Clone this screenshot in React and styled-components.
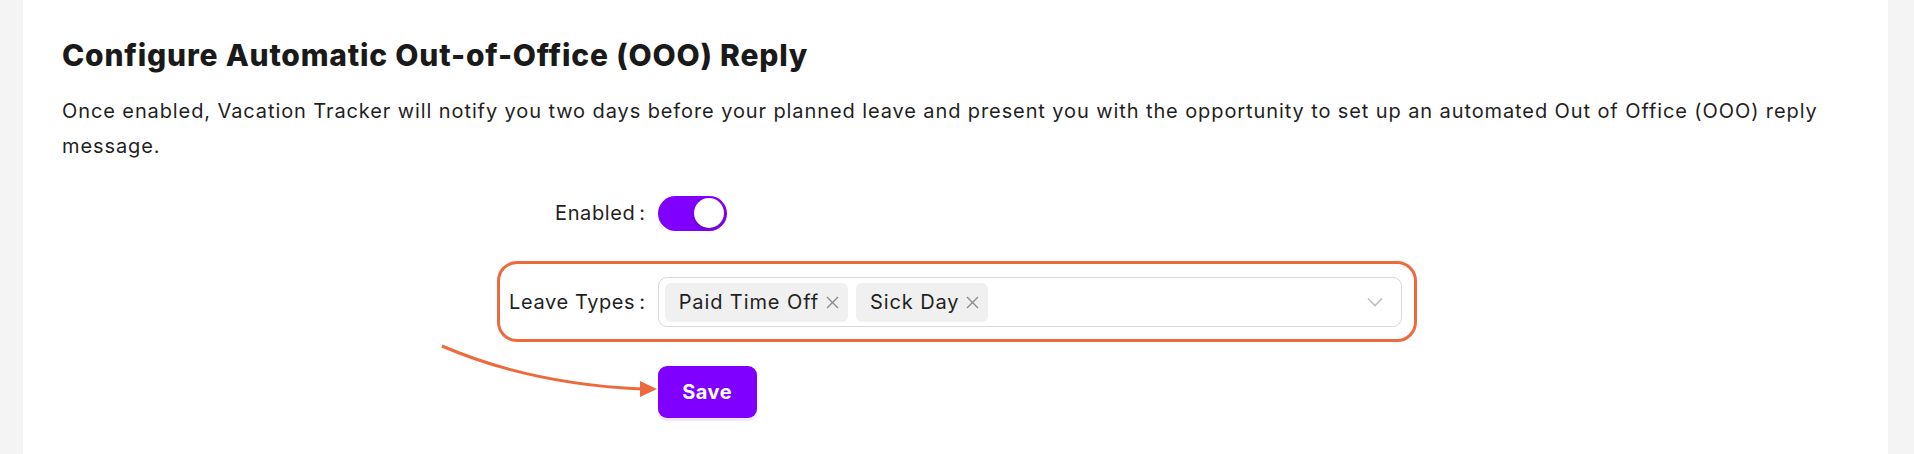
import React from 'react';
import styled, {createGlobalStyle} from 'styled-components';

const GlobalStyle = createGlobalStyle`
  body {
    margin: 0;
    background: #f4f4f4;
    font-family: Inter, Lato, sans-serif;
    color: #1f1f1f;
  }
`;

const Page = styled.div`
  display: flex;
  padding: 0 26px 0 23px;
  min-height: 454px;
`;

const Card = styled.section`
  flex: 1;
  background: #fff;
  padding: 35px 39px 0;
`;

const Title = styled.h2`
  margin: 0 0 19px;
  font-size: 30px;
  line-height: 40px;
  font-weight: 800;
  letter-spacing: 0.8px;
  color: #1a1a1a;
`;

const Intro = styled.p`
  margin: 0 0 24px;
  font-size: 20px;
  line-height: 35px;
  letter-spacing: 0.9px;
`;

const Form = styled.div`
  display: flex;
  flex-direction: column;
  gap: 39px;
`;

const Row = styled.div`
  position: relative;
  display: flex;
  align-items: center;
  min-height: ${p => p.height || 50}px;
`;

const Label = styled.label`
  width: 33.333%;
  flex: none;
  text-align: right;
  font-size: 20px;
  letter-spacing: 0.6px;

  &::after {
    content: ':';
    margin: 0 12px 0 4px;
  }
`;

const Spacer = styled.div`
  width: 33.333%;
  flex: none;
`;

const Control = styled.div`
  width: 41.667%;
  flex: none;
  display: flex;
  align-items: center;
`;

const Switch = styled.button`
  width: 69px;
  height: 35px;
  border: none;
  border-radius: 18px;
  background: #7f00ff;
  padding: 2.5px;
  display: flex;
  justify-content: flex-end;

  & span {
    width: 30px;
    height: 30px;
    border-radius: 50%;
    background: #fff;
    box-shadow: 0 2px 4px rgba(0, 35, 11, 0.2);
  }
`;

const Select = styled.div`
  flex: 1;
  height: 50px;
  box-sizing: border-box;
  border: 1px solid #d9d9d9;
  border-radius: 9px;
  padding: 0 18px 0 6px;
  display: flex;
  align-items: center;
  gap: 8px;
`;

const Tag = styled.span`
  height: 39px;
  display: inline-flex;
  align-items: center;
  gap: 7px;
  padding: 0 9px 0 14px;
  background: #f0f0f0;
  border-radius: 6px;
  font-size: 20px;
  letter-spacing: 0.9px;
  color: #1f1f1f;
`;

const Chevron = styled.svg`
  margin-left: auto;
`;

const Highlight = styled.div`
  position: absolute;
  left: 435px;
  top: -16px;
  width: 920px;
  height: 81px;
  box-sizing: border-box;
  border: 3px solid #ec6a3e;
  border-radius: 20px;
  pointer-events: none;
`;

const SaveButton = styled.button`
  height: 52px;
  width: 99px;
  border: none;
  border-radius: 9px;
  background: #7f00ff;
  color: #fff;
  font-family: inherit;
  font-size: 20px;
  font-weight: 700;
  letter-spacing: 0.5px;
  box-shadow: 0 3px 0 rgba(127, 0, 255, 0.1);
`;

const Pointer = styled.svg`
  position: absolute;
  left: 368px;
  top: -27px;
  overflow: visible;
`;

const Close = () => (
  <svg width="13" height="13" viewBox="0 0 13 13">
    <path d="M1 1L12 12M12 1L1 12" stroke="#8c8c8c" strokeWidth="1.4" />
  </svg>
);

export default function App() {
  return (
    <>
      <GlobalStyle />
      <Page>
        <Card>
          <Title>Configure Automatic Out-of-Office (OOO) Reply</Title>
          <Intro>
            Once enabled, Vacation Tracker will notify you two days before your planned leave and present you with the
            opportunity to set up an automated Out of Office (OOO) reply message.
          </Intro>
          <Form>
            <Row>
              <Label>Enabled</Label>
              <Control>
                <Switch><span /></Switch>
              </Control>
            </Row>
            <Row>
              <Highlight />
              <Label>Leave Types</Label>
              <Control>
                <Select>
                  <Tag>Paid Time Off <Close /></Tag>
                  <Tag>Sick Day <Close /></Tag>
                  <Chevron width="16" height="10" viewBox="0 0 16 10">
                    <path d="M1 1.5L8 8.5L15 1.5" fill="none" stroke="#bfbfbf" strokeWidth="1.6" />
                  </Chevron>
                </Select>
              </Control>
            </Row>
            <Row height={52}>
              <Pointer width="230" height="60" viewBox="0 0 230 60">
                <path d="M12 7Q100 45 212 50" fill="none" stroke="#ec6a3e" strokeWidth="3" />
                <path d="M227 50L210 42L210 58Z" fill="#ec6a3e" />
              </Pointer>
              <Spacer />
              <Control>
                <SaveButton>Save</SaveButton>
              </Control>
            </Row>
          </Form>
        </Card>
      </Page>
    </>
  );
}
